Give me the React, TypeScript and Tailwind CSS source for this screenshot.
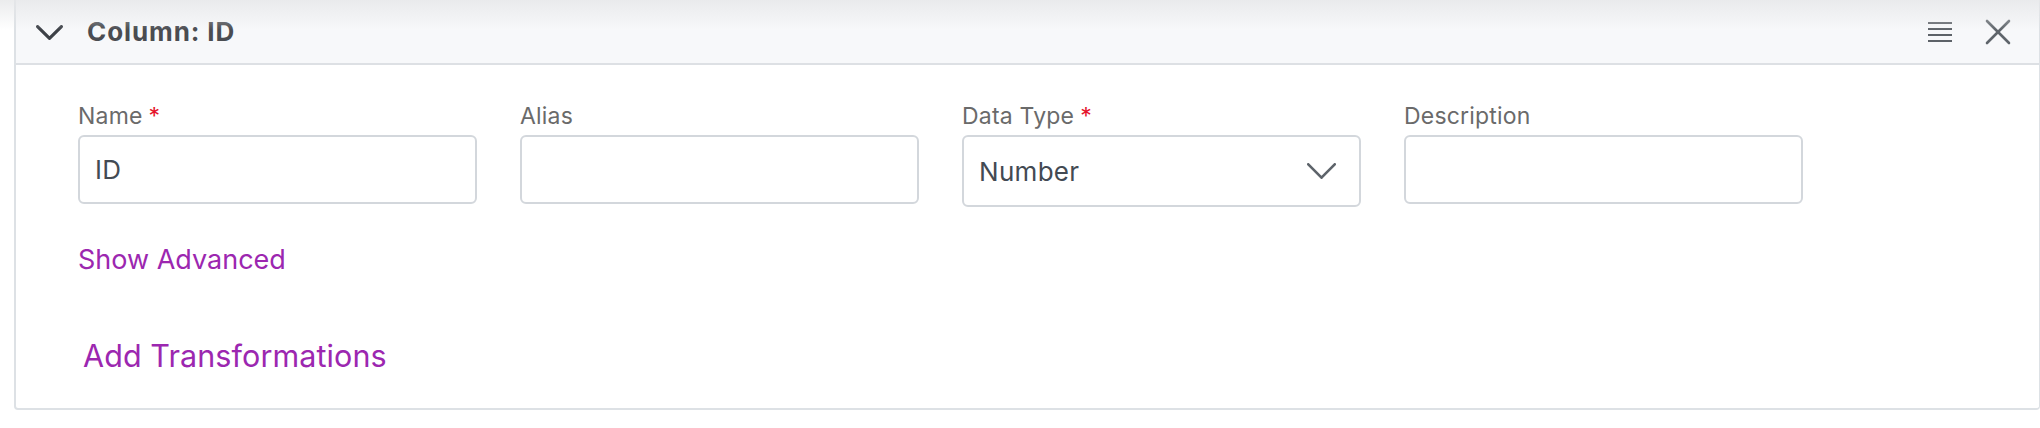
import React from "react";

interface Field {
  label: string;
  required?: boolean;
  value?: string;
  select?: boolean;
}

const fields: Field[] = [
  { label: "Name", required: true, value: "ID" },
  { label: "Alias" },
  { label: "Data Type", required: true, value: "Number", select: true },
  { label: "Description" },
];

const ChevronDown: React.FC<{ className?: string; width: number; height: number; stroke: number }> = ({
  className,
  width,
  height,
  stroke,
}) => (
  <svg width={width} height={height} viewBox={`0 0 ${width} ${height}`} className={className} fill="none">
    <polyline
      points={`${stroke / 2},${stroke / 2} ${width / 2},${height - stroke / 2} ${width - stroke / 2},${stroke / 2}`}
      stroke="currentColor"
      strokeWidth={stroke}
      strokeLinecap="round"
      strokeLinejoin="round"
    />
  </svg>
);

const FormField: React.FC<{ field: Field }> = ({ field }) => (
  <div className="flex flex-col w-[399px]">
    <label className="text-[23px] leading-[26px] tracking-[0.2px] text-[#6a6a6a] mb-[6px]">
      {field.label}
      {field.required && <span className="text-[#e5132b] ml-[6px]">*</span>}
    </label>
    <div
      className={`flex items-center justify-between border-2 border-[#d3d7dc] rounded-[6px] bg-white px-[15px] ${
        field.select ? "h-[72px]" : "h-[69px]"
      }`}
    >
      <span className="text-[26px] tracking-[0.3px] text-[#434a53]">{field.value ?? ""}</span>
      {field.select && <ChevronDown className="text-[#5d636a] mr-[8px]" width={29} height={16} stroke={2.6} />}
    </div>
  </div>
);

export default function App() {
  return (
    <div className="relative w-[2040px] h-[428px] bg-white overflow-hidden" style={{ fontFamily: "Inter, 'Noto Sans', sans-serif" }}>
      <div className="pl-[14px] h-[410px]">
        <div className="h-full border-l-2 border-r border-b-2 border-[#dde1e5] rounded-b-[4px] flex flex-col">
          {/* header */}
          <div className="h-[65px] shrink-0 bg-[#f7f8fa] border-b-2 border-[#dde0e4] flex items-center pl-[20px] pr-[28px]">
            <ChevronDown className="text-[#3d4147] mt-[1px]" width={27} height={15} stroke={3.2} />
            <h2 className="ml-[24px] text-[26px] font-bold text-[#4a4c51] tracking-[0.9px] -mt-[1px]">Column: ID</h2>
            <div className="ml-auto flex items-center gap-[33px]">
              <svg width="24" height="20" viewBox="0 0 24 20" className="text-[#5d6268]">
                <g stroke="currentColor" strokeWidth="2">
                  <line x1="0" y1="1" x2="24" y2="1" />
                  <line x1="0" y1="7" x2="24" y2="7" />
                  <line x1="0" y1="13" x2="24" y2="13" />
                  <line x1="0" y1="19" x2="24" y2="19" />
                </g>
              </svg>
              <svg width="26" height="26" viewBox="0 0 26 26" className="text-[#5f656b]">
                <g stroke="currentColor" strokeWidth="2.6" strokeLinecap="round">
                  <line x1="2" y1="2" x2="24" y2="24" />
                  <line x1="24" y1="2" x2="2" y2="24" />
                </g>
              </svg>
            </div>
          </div>

          {/* body */}
          <div className="flex flex-col pl-[62px] pt-[38px]">
            <div className="flex gap-[43px]">
              {fields.map((f) => (
                <FormField key={f.label} field={f} />
              ))}
            </div>
            <a className="mt-[33px] text-[27px] text-[#9c27b0] w-fit cursor-pointer">Show Advanced</a>
            <a className="mt-[52px] ml-[5px] text-[30.5px] tracking-[0.1px] text-[#9c27b0] w-fit cursor-pointer">
              Add Transformations
            </a>
          </div>
        </div>
      </div>
      {/* faint shadow cast from above */}
      <div className="pointer-events-none absolute inset-x-0 top-0 h-[30px] bg-gradient-to-b from-[#e6e7e9] to-transparent opacity-80" />
    </div>
  );
}
